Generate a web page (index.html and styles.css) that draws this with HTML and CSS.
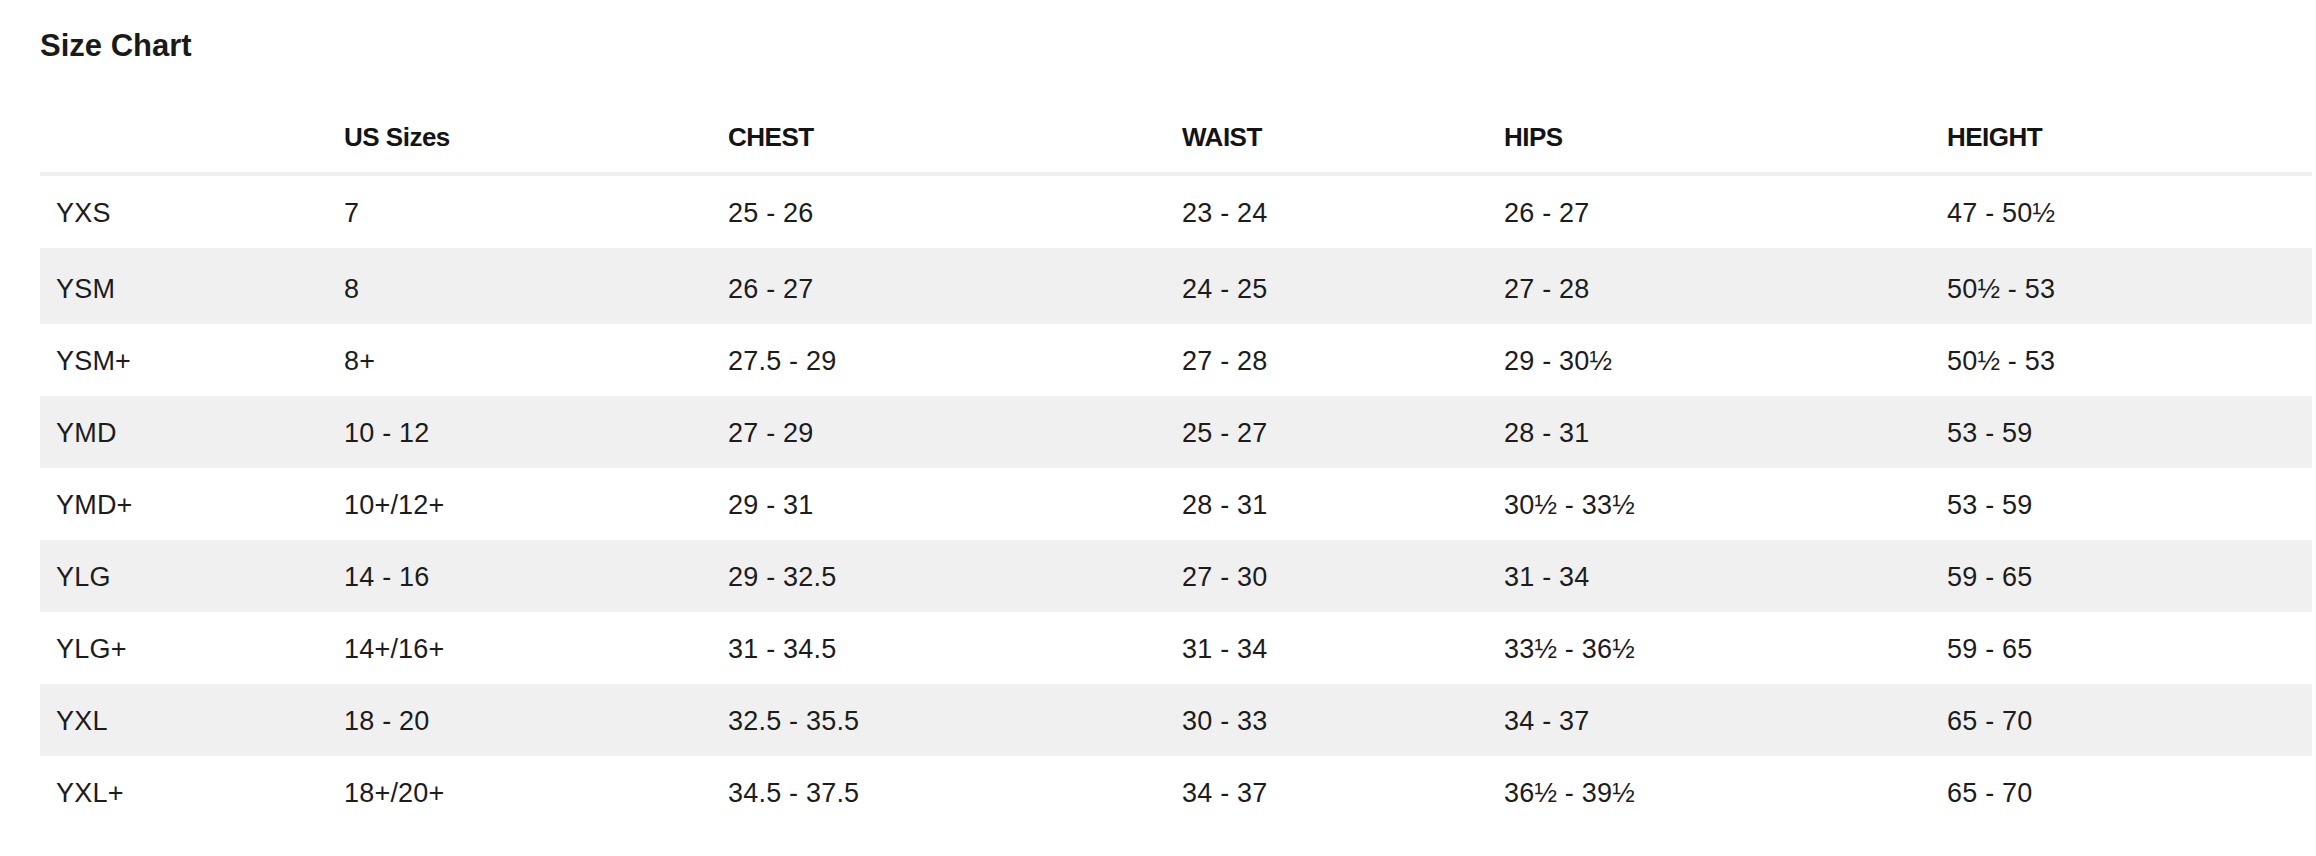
FILE: index.html
```html
<!DOCTYPE html>
<html lang="en">
<head>
<meta charset="utf-8">
<title>Size Chart</title>
<link rel="stylesheet" href="styles.css">
</head>
<body>
<main class="page">
  <h1 class="title">Size Chart</h1>
  <div class="chart">
    <div class="row head">
      <div class="cell"></div>
      <div class="cell">US Sizes</div>
      <div class="cell">CHEST</div>
      <div class="cell">WAIST</div>
      <div class="cell">HIPS</div>
      <div class="cell">HEIGHT</div>
    </div>
    <div class="row">
      <div class="cell">YXS</div><div class="cell">7</div><div class="cell">25 - 26</div><div class="cell">23 - 24</div><div class="cell">26 - 27</div><div class="cell">47 - 50½</div>
    </div>
    <div class="row alt tall">
      <div class="cell">YSM</div><div class="cell">8</div><div class="cell">26 - 27</div><div class="cell">24 - 25</div><div class="cell">27 - 28</div><div class="cell">50½ - 53</div>
    </div>
    <div class="row">
      <div class="cell">YSM+</div><div class="cell">8+</div><div class="cell">27.5 - 29</div><div class="cell">27 - 28</div><div class="cell">29 - 30½</div><div class="cell">50½ - 53</div>
    </div>
    <div class="row alt">
      <div class="cell">YMD</div><div class="cell">10 - 12</div><div class="cell">27 - 29</div><div class="cell">25 - 27</div><div class="cell">28 - 31</div><div class="cell">53 - 59</div>
    </div>
    <div class="row">
      <div class="cell">YMD+</div><div class="cell">10+/12+</div><div class="cell">29 - 31</div><div class="cell">28 - 31</div><div class="cell">30½ - 33½</div><div class="cell">53 - 59</div>
    </div>
    <div class="row alt">
      <div class="cell">YLG</div><div class="cell">14 - 16</div><div class="cell">29 - 32.5</div><div class="cell">27 - 30</div><div class="cell">31 - 34</div><div class="cell">59 - 65</div>
    </div>
    <div class="row">
      <div class="cell">YLG+</div><div class="cell">14+/16+</div><div class="cell">31 - 34.5</div><div class="cell">31 - 34</div><div class="cell">33½ - 36½</div><div class="cell">59 - 65</div>
    </div>
    <div class="row alt">
      <div class="cell">YXL</div><div class="cell">18 - 20</div><div class="cell">32.5 - 35.5</div><div class="cell">30 - 33</div><div class="cell">34 - 37</div><div class="cell">65 - 70</div>
    </div>
    <div class="row">
      <div class="cell">YXL+</div><div class="cell">18+/20+</div><div class="cell">34.5 - 37.5</div><div class="cell">34 - 37</div><div class="cell">36½ - 39½</div><div class="cell">65 - 70</div>
    </div>
  </div>
</main>
</body>
</html>
```

FILE: styles.css
```css
html, body {
  margin: 0;
  padding: 0;
  background: #ffffff;
}

body {
  font-family: "Liberation Sans", Arial, sans-serif;
  color: #1c1c1c;
}

.page {
  padding: 27px 4px 0 40px;
}

.title {
  margin: 0;
  font-size: 31px;
  line-height: 38px;
  font-weight: 700;
  color: #1a1a1a;
  letter-spacing: 0;
}

.chart {
  margin-top: 56px;
  display: flex;
  flex-direction: column;
}

.row {
  display: grid;
  grid-template-columns: 288px 384px 454px 322px 443px 1fr;
  height: 72px;
  align-items: center;
}

.row.alt {
  background: #f0f0f0;
}

.row.tall {
  height: 76px;
  padding-top: 4px;
  box-sizing: border-box;
}

.cell {
  padding-left: 16px;
  font-size: 27px;
  line-height: 32px;
  letter-spacing: 0.2px;
  white-space: nowrap;
  padding-top: 2px;
}

.row.head {
  height: auto;
  align-items: end;
  border-bottom: 4px solid #efefef;
}

.row.head .cell {
  font-size: 26px;
  line-height: 32px;
  font-weight: 700;
  letter-spacing: -0.5px;
  color: #141414;
  padding-top: 0;
  padding-bottom: 19px;
}
```
